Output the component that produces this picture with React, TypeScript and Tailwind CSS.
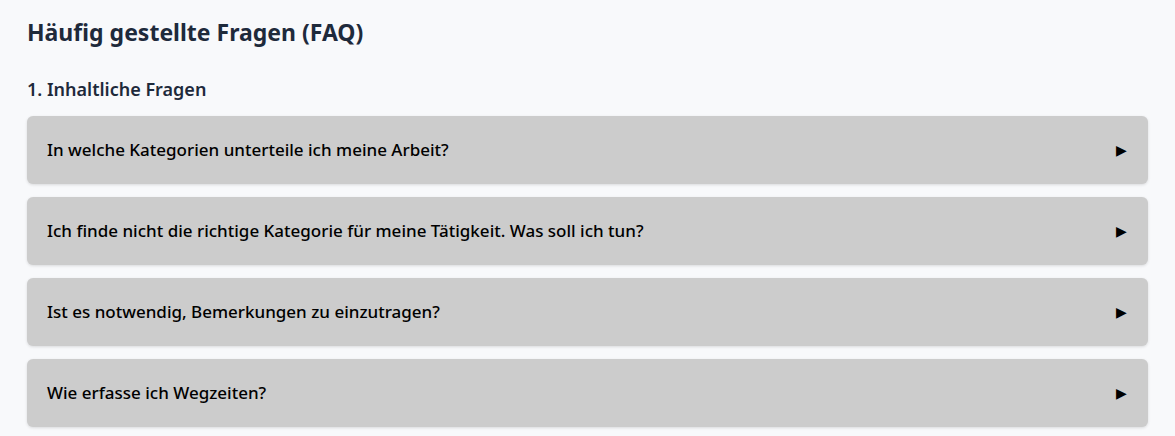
import { useState } from 'react'

interface FaqItem {
  question: string
  answer: string
}

const contentQuestions: FaqItem[] = [
  {
    question: 'In welche Kategorien unterteile ich meine Arbeit?',
    answer: '',
  },
  {
    question: 'Ich finde nicht die richtige Kategorie für meine Tätigkeit. Was soll ich tun?',
    answer: '',
  },
  {
    question: 'Ist es notwendig, Bemerkungen zu einzutragen?',
    answer: '',
  },
  {
    question: 'Wie erfasse ich Wegzeiten?',
    answer: '',
  },
]

function FaqEntry({ item }: { item: FaqItem }) {
  const [open, setOpen] = useState(false)
  return (
    <div className="rounded-md bg-[#cccccc] shadow-[0_1px_3px_rgba(0,0,0,0.12)]">
      <button
        type="button"
        onClick={() => setOpen(!open)}
        className="flex h-[68px] w-full items-center justify-between pl-5 pr-[21px] text-left text-[17px] font-medium text-black"
      >
        <span>{item.question}</span>
        <span className="text-[14px] leading-none">{open ? '▼' : '▶'}</span>
      </button>
      {open && item.answer && <div className="px-5 pb-4 text-[15px]">{item.answer}</div>}
    </div>
  )
}

export default function App() {
  return (
    <div
      className="min-h-screen bg-[#f8f9fb] px-[27px] pt-[16px] pb-6"
      style={{ fontFamily: '"Segoe UI", "Noto Sans", "Open Sans", sans-serif' }}
    >
      <h1 className="text-[23px] font-bold leading-[32px] text-[#1e2a3b]">Häufig gestellte Fragen (FAQ)</h1>
      <h2 className="mt-[29px] text-[18px] font-semibold leading-6 text-[#1e2a3b]">1. Inhaltliche Fragen</h2>
      <div className="mt-[15px] flex w-[1121px] flex-col gap-[13px]">
        {contentQuestions.map((item) => (
          <FaqEntry key={item.question} item={item} />
        ))}
      </div>
    </div>
  )
}
